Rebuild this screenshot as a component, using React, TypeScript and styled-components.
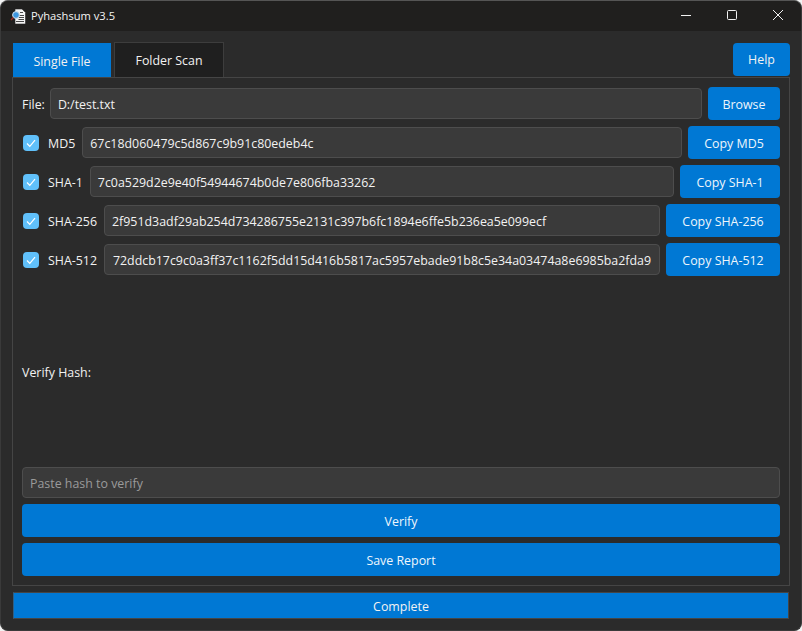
import { createGlobalStyle, styled } from "styled-components";

const GlobalStyle = createGlobalStyle`
  html, body {
    margin: 0;
    height: 100%;
    background: #f3f3f3;
  }
  * {
    box-sizing: border-box;
  }
`;

const Window = styled.div`
  width: 802px;
  height: 631px;
  display: flex;
  flex-direction: column;
  background: #2b2b2b;
  border: 1px solid #3a3a3a;
  border-top-color: #555;
  border-radius: 8px;
  overflow: hidden;
  color: #f2f2f2;
  font-family: "Open Sans", "Noto Sans", sans-serif;
  font-size: 12.4px;
`;

const TitleBar = styled.div`
  height: 30px;
  flex: none;
  display: flex;
  align-items: center;
  background: #201f1e;
  padding-left: 9px;
`;

const AppTitle = styled.span`
  margin-left: 4px;
  margin-top: -1px;
  font-size: 11.15px;
  color: #f4f4f4;
`;

const WindowControls = styled.div`
  margin-left: auto;
  display: flex;
  height: 100%;
`;

const WindowButton = styled.div`
  width: 46px;
  height: 100%;
  display: flex;
  align-items: center;
  justify-content: center;
  margin-top: -1px;
`;

const Content = styled.div`
  flex: 1;
  display: flex;
  flex-direction: column;
  padding: 11px;
  min-height: 0;
`;

const TabRow = styled.div`
  display: flex;
  align-items: flex-end;
  height: 35px;
  flex: none;
`;

const Tab = styled.div<{ $active?: boolean; $w: number }>`
  width: ${(p) => p.$w}px;
  height: ${(p) => (p.$active ? 34 : 35)}px;
  margin-left: ${(p) => (p.$active ? 1 : 3)}px;
  display: flex;
  align-items: center;
  justify-content: center;
  background: ${(p) => (p.$active ? "#0078d4" : "#1f1f1f")};
  border: ${(p) => (p.$active ? "none" : "1px solid #3d3d3d")};
  border-bottom: none;
  padding-top: ${(p) => (p.$active ? 3 : 1)}px;
`;

const HelpButton = styled.div`
  margin-left: auto;
  margin-bottom: 1px;
  width: 57px;
  height: 33px;
  display: flex;
  align-items: center;
  justify-content: center;
  background: #0078d4;
  border-radius: 4px;
`;

const Pane = styled.div`
  flex: 1;
  display: flex;
  flex-direction: column;
  gap: 6px;
  padding: 9px;
  border: 1px solid #454545;
  min-height: 0;
`;

const Row = styled.div`
  display: flex;
  align-items: center;
  gap: 6px;
  height: 33px;
  flex: none;
`;

const Field = styled.div<{ $placeholder?: boolean; $scrolled?: boolean }>`
  flex: 1 0 0;
  min-width: 0;
  height: 31px;
  display: flex;
  align-items: center;
  justify-content: ${(p) => (p.$scrolled ? "flex-end" : "flex-start")};
  padding: 2px 8px 0 7px;
  background: #3a3a3a;
  border: 1px solid #4d4d4d;
  border-radius: 4px;
  white-space: nowrap;
  color: ${(p) => (p.$placeholder ? "#9a9a9a" : "#f2f2f2")};
`;

const VerifyField = styled(Field)`
  flex: none;
`;

const ActionButton = styled.div<{ $w: number }>`
  width: ${(p) => p.$w}px;
  height: 33px;
  flex: none;
  display: flex;
  align-items: center;
  justify-content: center;
  padding-top: 2px;
  background: #0078d4;
  border-radius: 4px;
  color: #eef6fc;
`;

const WideButton = styled.div`
  height: 33px;
  flex: none;
  display: flex;
  align-items: center;
  justify-content: center;
  padding-top: 2px;
  background: #0078d4;
  border-radius: 4px;
  color: #eef6fc;
`;

const CheckBox = styled.div`
  width: 16px;
  height: 16px;
  margin-left: 1px;
  margin-right: 3px;
  flex: none;
  display: flex;
  align-items: center;
  justify-content: center;
  background: #60c0fa;
  border-radius: 4px;
`;

const HashLabel = styled.span`
  white-space: nowrap;
  padding-top: 2px;
  margin-right: 1px;
`;

const FileLabel = styled.span`
  white-space: nowrap;
  padding-top: 2px;
  margin-right: -1px;
`;

const VerifyLabel = styled.div`
  flex: 1;
  display: flex;
  align-items: center;
  padding-top: 2px;
`;

const Progress = styled.div`
  margin: 6px 1px 0;
  height: 27px;
  flex: none;
  display: flex;
  align-items: center;
  justify-content: center;
  padding-top: 2px;
  background: #0078d4;
  border: 1px solid #454545;
  border-left-color: #2f5f85;
  color: #f2f2f2;
`;

const hashes = [
  { name: "MD5", value: "67c18d060479c5d867c9b91c80edeb4c", button: 92 },
  { name: "SHA-1", value: "7c0a529d2e9e40f54944674b0de7e806fba33262", button: 100 },
  { name: "SHA-256", value: "2f951d3adf29ab254d734286755e2131c397b6fc1894e6ffe5b236ea5e099ecf", button: 114 },
  {
    name: "SHA-512",
    value: "72ddcb17c9c0a3ff37c1162f5dd15d416b5817ac5957ebade91b8c5e34a03474a8e6985ba2fda9",
    button: 114,
    scrolled: true,
  },
];

function AppIcon() {
  return (
    <svg width="17" height="17" viewBox="0 0 17 17">
      <path d="M5 1h7l3.5 3.5V16H5z" fill="#f4f4f4" stroke="#222" strokeWidth="0.6" />
      <path d="M8.5 7.5h5.5M8.5 9.5h5.5M8.5 11.5h5.5M6 13.5h8M10 4.5h3" stroke="#333" strokeWidth="0.9" />
      <circle cx="6" cy="7" r="3.4" fill="#3f97e0" stroke="#d8e4ee" strokeWidth="1" />
      <path d="M3.4 9.6L1 12" stroke="#a02a20" strokeWidth="1.4" />
    </svg>
  );
}

export default function App() {
  return (
    <>
      <GlobalStyle />
      <Window>
        <TitleBar>
          <AppIcon />
          <AppTitle>Pyhashsum v3.5</AppTitle>
          <WindowControls>
            <WindowButton>
              <svg width="10" height="10" viewBox="0 0 10 10">
                <path d="M0 5.5h10" stroke="#f2f2f2" strokeWidth="1" />
              </svg>
            </WindowButton>
            <WindowButton>
              <svg width="10" height="10" viewBox="0 0 10 10">
                <rect x="0.5" y="0.5" width="9" height="9" rx="1" fill="none" stroke="#f2f2f2" strokeWidth="1" />
              </svg>
            </WindowButton>
            <WindowButton>
              <svg width="10" height="10" viewBox="0 0 10 10">
                <path d="M0 0l10 10M10 0L0 10" stroke="#f2f2f2" strokeWidth="1" />
              </svg>
            </WindowButton>
          </WindowControls>
        </TitleBar>
        <Content>
          <TabRow>
            <Tab $active $w={98}>Single File</Tab>
            <Tab $w={110}>Folder Scan</Tab>
            <HelpButton>Help</HelpButton>
          </TabRow>
          <Pane>
            <Row>
              <FileLabel>File:</FileLabel>
              <Field>D:/test.txt</Field>
              <ActionButton $w={72}>Browse</ActionButton>
            </Row>
            {hashes.map((hash) => (
              <Row key={hash.name}>
                <CheckBox>
                  <svg width="12" height="12" viewBox="0 0 12 12">
                    <path d="M2 6.5l2.8 2.8L10 3.2" fill="none" stroke="#fff" strokeWidth="1.2" />
                  </svg>
                </CheckBox>
                <HashLabel>{hash.name}</HashLabel>
                <Field $scrolled={hash.scrolled}>{hash.value}</Field>
                <ActionButton $w={hash.button}>Copy {hash.name}</ActionButton>
              </Row>
            ))}
            <VerifyLabel>Verify Hash:</VerifyLabel>
            <VerifyField $placeholder>Paste hash to verify</VerifyField>
            <WideButton>Verify</WideButton>
            <WideButton>Save Report</WideButton>
          </Pane>
          <Progress>Complete</Progress>
        </Content>
      </Window>
    </>
  );
}
